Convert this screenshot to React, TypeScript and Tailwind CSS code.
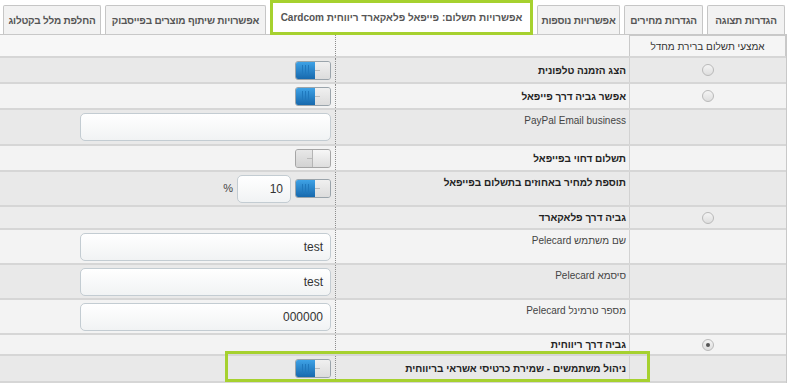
import React from "react";

const tabs = [
  { label: "הגדרות תצוגה", w: "w-[78px]" },
  { label: "הגדרות מחירים", w: "w-[79px]" },
  { label: "אפשרויות נוספות", w: "w-[83px]" },
  { label: "אפשרויות תשלום: פייפאל פלאקארד ריווחית Cardcom", w: "w-[263px]", active: true },
  { label: "אפשרויות שיתוף מוצרים בפייסבוק", w: "w-[161px]" },
  { label: "החלפת מלל בקטלוג", w: "w-[98px]" },
];

function Toggle({ on }: { on: boolean }) {
  if (on) {
    return (
      <div dir="ltr" className="flex h-[19px] w-[36px] overflow-hidden rounded-[3px] border border-[#9aa4ab] bg-[#e4e4e4]">
        <div className="flex h-full w-[19px] items-center justify-center gap-[2px] bg-gradient-to-b from-[#3ea2e6] to-[#1769ad]">
          <span className="h-[10px] w-px bg-[#1f78bd]" />
          <span className="h-[10px] w-px bg-[#1f78bd]" />
          <span className="h-[10px] w-px bg-[#1f78bd]" />
        </div>
        <div className="flex h-full flex-1 items-center bg-gradient-to-b from-[#f0f0f0] to-[#dcdcdc]">
          <span className="h-px w-[5px] bg-[#bbb]" />
        </div>
      </div>
    );
  }
  return (
    <div dir="ltr" className="flex h-[19px] w-[36px] overflow-hidden rounded-[3px] border border-[#a5a5a5] bg-[#dcdcdc]">
      <div className="flex h-full flex-1 items-center justify-end bg-gradient-to-b from-[#e8e8e8] to-[#d2d2d2]">
        <span className="h-px w-[5px] bg-[#bbb]" />
      </div>
      <div className="h-full w-[18px] border-l border-[#b5b5b5] bg-gradient-to-b from-[#f7f7f7] to-[#dedede]" />
    </div>
  );
}

function Input({ value = "", w = "w-[251px]" }: { value?: string; w?: string }) {
  return (
    <div
      className={`${w} flex h-[28px] items-center justify-end rounded-[5px] border border-[#c3ccd2] bg-gradient-to-b from-white to-[#f1f3f4] pr-[7px] text-[12px] text-[#333]`}
      dir="ltr"
    >
      {value}
    </div>
  );
}

function Radio({ checked }: { checked?: boolean }) {
  return (
    <div className="flex h-[12px] w-[12px] items-center justify-center rounded-full border border-[#b9b9b9] bg-gradient-to-b from-[#f4f4f4] to-[#dedede]">
      {checked && <span className="h-[4px] w-[4px] rounded-full bg-[#555]" />}
    </div>
  );
}

type RowProps = {
  h: string;
  bg: string;
  label: string;
  bold?: boolean;
  top?: boolean;
  radio?: "off" | "on";
  control?: React.ReactNode;
};

function Row({ h, bg, label, bold, top, radio, control }: RowProps) {
  return (
    <div className={`flex ${h} ${bg} border-b-2 border-[#d6d6d6]`}>
      <div className="flex w-[157px] items-center justify-center border-l border-[#d2d2d2]">
        {radio && <Radio checked={radio === "on"} />}
      </div>
      <div
        className={`flex w-[294px] border-l border-dotted border-[#8c8c8c] pr-[3px] ${top ? "items-start pt-[3px]" : "items-center"} ${bold ? "font-bold text-[#222]" : "text-[#444]"} text-[10px]`}
      >
        {label}
      </div>
      <div className="flex flex-1 items-center justify-start pr-[4px]">{control}</div>
    </div>
  );
}

export default function App() {
  return (
    <div
      className="relative h-[383px] w-[800px] overflow-hidden bg-white"
      style={{ fontFamily: '"Liberation Sans", "DejaVu Sans", Arial, sans-serif' }}
    >
      <div dir="rtl" className="w-[787px]">
        {/* tabs */}
        <div className="flex h-[35px] items-end gap-[4px] border-b border-[#c8c8c8] pr-[2px]">
          {tabs.map((t) =>
            t.active ? (
              <div
                key={t.label}
                className={`${t.w} -mb-px flex h-[35px] items-center justify-center whitespace-nowrap border-[3px] border-[#a6d12f] bg-white text-[10px] font-bold text-[#555]`}
              >
                {t.label}
              </div>
            ) : (
              <div
                key={t.label}
                className={`${t.w} flex h-[29px] items-center justify-center whitespace-nowrap rounded-t-[2px] border border-b-0 border-[#c6c6c6] bg-[#f2f2f2] text-[10px] font-bold tracking-[-0.2px] text-[#555]`}
              >
                {t.label}
              </div>
            )
          )}
        </div>

        {/* table */}
        <div className="border-r border-[#c8c8c8]">
          <div className="flex h-[23px] border-b-2 border-[#d6d6d6] bg-[#f7f7f7]">
            <div className="flex w-[157px] items-center justify-center border-x border-t border-[#c9c9c9] bg-[#f5f5f5] text-[10px] text-[#333]">
              אמצעי תשלום ברירת מחדל
            </div>
            <div className="w-[294px] border-l border-dotted border-[#8c8c8c]" />
            <div className="flex-1" />
          </div>
          <Row h="h-[26px]" bg="bg-[#e9e9e9]" label="הצג הזמנה טלפונית" bold radio="off" control={<Toggle on />} />
          <Row h="h-[26px]" bg="bg-[#f3f3f3]" label="אפשר גביה דרך פייפאל" bold radio="off" control={<Toggle on />} />
          <Row h="h-[36px]" bg="bg-[#e9e9e9]" label="PayPal Email business" top control={<Input />} />
          <Row h="h-[26px]" bg="bg-[#f3f3f3]" label="תשלום דחוי בפייפאל" bold control={<Toggle on={false} />} />
          <Row
            h="h-[35px]"
            bg="bg-[#e9e9e9]"
            label="תוספת למחיר באחוזים בתשלום בפייפאל"
            bold
            top
            control={
              <div className="flex items-center gap-[4px]">
                <Toggle on />
                <Input value="10" w="w-[54px]" />
                <span className="text-[11px] text-[#444]">%</span>
              </div>
            }
          />
          <Row h="h-[23px]" bg="bg-[#ececec]" label="גביה דרך פלאקארד" bold radio="off" />
          <Row h="h-[35px]" bg="bg-[#f3f3f3]" label="שם משתמש Pelecard" top control={<Input value="test" />} />
          <Row h="h-[35px]" bg="bg-[#e9e9e9]" label="סיסמא Pelecard" top control={<Input value="test" />} />
          <Row h="h-[35px]" bg="bg-[#f3f3f3]" label="מספר טרמינל Pelecard" top control={<Input value="000000" />} />
          <Row h="h-[21px]" bg="bg-[#f3f3f3]" label="גביה דרך ריווחית" bold radio="on" />
          <Row h="h-[27px]" bg="bg-[#e9e9e9]" label="ניהול משתמשים - שמירת כרטיסי אשראי בריווחית" bold control={<Toggle on />} />
        </div>
      </div>

      {/* highlight around last row */}
      <div className="pointer-events-none absolute left-[225px] top-[351px] h-[31px] w-[425px] border-[3px] border-[#a6d12f]" />
    </div>
  );
}
